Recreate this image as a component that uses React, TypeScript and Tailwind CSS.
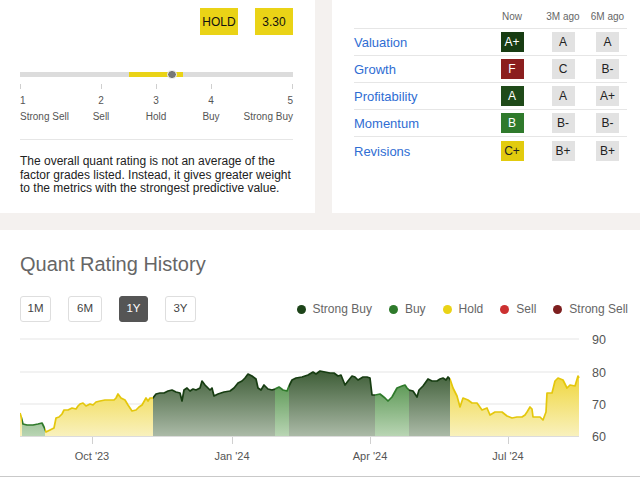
import React from "react";

const grades = [
  { name: "Valuation", now: "A+", nowBg: "bg-[#173c12] text-white", m3: "A", m6: "A" },
  { name: "Growth", now: "F", nowBg: "bg-[#8b1e1e] text-white", m3: "C", m6: "B-" },
  { name: "Profitability", now: "A", nowBg: "bg-[#1f4a19] text-white", m3: "A", m6: "A+" },
  { name: "Momentum", now: "B", nowBg: "bg-[#2f7a2c] text-white", m3: "B-", m6: "B-" },
  { name: "Revisions", now: "C+", nowBg: "bg-[#e2cb0e] text-[#222]", m3: "B+", m6: "B+" },
];

const scale = [
  { n: "1", label: "Strong Sell", w: "w-[61px]", align: "items-start" },
  { n: "2", label: "Sell", w: "w-[40px]", align: "items-center" },
  { n: "3", label: "Hold", w: "w-[70px]", align: "items-center" },
  { n: "4", label: "Buy", w: "w-[40px]", align: "items-center" },
  { n: "5", label: "Strong Buy", w: "w-[62px]", align: "items-end" },
];

const legend = [
  { label: "Strong Buy", color: "bg-[#1d4419]" },
  { label: "Buy", color: "bg-[#2e7a2b]" },
  { label: "Hold", color: "bg-[#ead316]" },
  { label: "Sell", color: "bg-[#cc3030]" },
  { label: "Strong Sell", color: "bg-[#7d1f1f]" },
];

// page coordinates (x, y) of the rating line
const pts: [number, number][] = [
  [20, 413], [21, 416], [23, 424], [27, 425], [33, 425], [38, 424], [42, 423], [44, 427], [46, 432],
  [50, 430], [54, 428], [56, 418], [59, 417], [62, 414], [64, 410], [68, 410], [72, 408], [76, 409],
  [78, 406], [80, 404], [83, 403], [86, 406], [90, 404], [93, 405], [96, 402], [100, 401], [105, 400],
  [110, 400], [114, 400], [116, 398], [118, 394], [121, 398], [125, 400], [128, 405], [132, 411],
  [136, 410], [139, 407], [142, 405], [146, 398], [148, 401], [150, 398], [153, 398], [156, 394],
  [160, 393], [164, 393], [168, 391], [172, 390], [176, 392], [180, 393], [182, 401], [184, 390],
  [187, 388], [190, 391], [193, 389], [196, 390], [200, 388], [202, 381], [205, 385], [208, 388],
  [210, 390], [212, 388], [214, 396], [218, 394], [224, 392], [230, 391], [234, 388], [238, 383],
  [242, 381], [245, 378], [248, 374], [252, 376], [256, 379], [258, 388], [261, 390], [264, 385],
  [268, 389], [272, 390], [275, 389], [279, 387], [283, 390], [287, 391], [289, 386], [292, 380],
  [296, 378], [302, 377], [308, 375], [313, 372], [316, 374], [320, 371], [325, 372], [330, 373],
  [334, 373], [338, 376], [341, 375], [345, 385], [348, 381], [352, 376], [355, 377], [358, 380],
  [363, 377], [367, 377], [370, 378], [372, 395], [375, 395], [380, 394], [385, 398], [388, 401],
  [392, 397], [397, 388], [402, 386], [405, 385], [407, 388], [409, 390], [413, 391], [417, 397],
  [419, 390], [423, 386], [428, 379], [432, 381], [437, 381], [440, 379], [443, 378], [446, 380],
  [448, 377], [450, 379], [453, 388], [457, 396], [460, 407], [463, 398], [468, 400], [472, 403],
  [477, 403], [482, 410], [487, 408], [490, 415], [495, 412], [502, 412], [507, 416], [512, 418],
  [517, 417], [522, 417], [525, 415], [527, 412], [530, 407], [532, 409], [533, 417], [540, 417],
  [543, 420], [546, 412], [547, 393], [552, 393], [555, 381], [558, 378], [563, 380], [567, 388],
  [570, 385], [575, 386], [578, 376], [579, 378],
];

const segments: { x0: number; x1: number; kind: "hold" | "buy" | "sbuy" }[] = [
  { x0: 20, x1: 22, kind: "hold" },
  { x0: 22, x1: 45, kind: "buy" },
  { x0: 45, x1: 153, kind: "hold" },
  { x0: 153, x1: 275, kind: "sbuy" },
  { x0: 275, x1: 289, kind: "buy" },
  { x0: 289, x1: 375, kind: "sbuy" },
  { x0: 375, x1: 409, kind: "buy" },
  { x0: 409, x1: 450, kind: "sbuy" },
  { x0: 450, x1: 580, kind: "hold" },
];

const strokes = { hold: "#e4c70c", buy: "#2f7a2b", sbuy: "#173d12" };

function Chart() {
  const line = pts.map(([x, y]) => `${x},${y}`).join(" ");
  const area = `M20,436 L${pts.map(([x, y]) => `${x},${y}`).join(" L")} L579,436 Z`;
  const font = "'Liberation Sans', Arial, sans-serif";
  return (
    <svg width="640" height="135" viewBox="0 330 640 135" className="block">
      <defs>
        <linearGradient id="g-hold" x1="0" y1="375" x2="0" y2="436" gradientUnits="userSpaceOnUse">
          <stop offset="0" stopColor="#efd63c" />
          <stop offset="1" stopColor="#f9f1bd" />
        </linearGradient>
        <linearGradient id="g-sbuy" x1="0" y1="372" x2="0" y2="436" gradientUnits="userSpaceOnUse">
          <stop offset="0" stopColor="#3f5e38" />
          <stop offset="1" stopColor="#abbaa7" />
        </linearGradient>
        <linearGradient id="g-buy" x1="0" y1="385" x2="0" y2="436" gradientUnits="userSpaceOnUse">
          <stop offset="0" stopColor="#5f9a58" />
          <stop offset="1" stopColor="#b9d5b4" />
        </linearGradient>
        {segments.map((s, i) => (
          <clipPath key={i} id={`seg${i}`}>
            <rect x={s.x0} y="330" width={s.x1 - s.x0} height="107" />
          </clipPath>
        ))}
      </defs>
      {[339, 372, 404].map((y) => (
        <line key={y} x1="20" x2="579" y1={y} y2={y} stroke="#e6e6e6" strokeWidth="1.2" />
      ))}
      {segments.map((s, i) => (
        <g key={i} clipPath={`url(#seg${i})`}>
          <path d={area} fill={`url(#g-${s.kind})`} />
          <polyline points={line} fill="none" stroke={strokes[s.kind]} strokeWidth="1.7" strokeLinejoin="round" />
        </g>
      ))}
      <line x1="20" x2="579" y1="436.5" y2="436.5" stroke="#dcdcdc" strokeWidth="1" />
      {[92, 232, 370, 508].map((x) => (
        <line key={x} x1={x + 0.5} x2={x + 0.5} y1="437" y2="444" stroke="#d0d0d0" strokeWidth="1" />
      ))}
      {[
        { x: 92, t: "Oct '23" },
        { x: 232, t: "Jan '24" },
        { x: 370, t: "Apr '24" },
        { x: 508, t: "Jul '24" },
      ].map((l) => (
        <text key={l.t} x={l.x} y="460" textAnchor="middle" fontSize="11" fill="#555" fontFamily={font}>
          {l.t}
        </text>
      ))}
      {[
        { y: 339, t: "90" },
        { y: 372, t: "80" },
        { y: 404, t: "70" },
        { y: 436, t: "60" },
      ].map((l) => (
        <text key={l.t} x="592" y={l.y + 4.5} fontSize="12.5" fill="#555" fontFamily={font}>
          {l.t}
        </text>
      ))}
    </svg>
  );
}

export default function App() {
  return (
    <div className="w-[640px] h-[477px] overflow-hidden bg-[#f4f1ef] font-['Liberation_Sans',Arial,sans-serif]">
      <div className="flex h-[213px] gap-[17px]">
        {/* overall rating */}
        <div className="w-[315px] bg-white pl-[20px] pr-[22px] pt-[8px]">
          <div className="flex justify-end gap-[17px]">
            <div className="flex h-[27px] w-[38px] items-center justify-center bg-[#ead316] text-[12px] text-[#111]">
              HOLD
            </div>
            <div className="flex h-[27px] w-[38px] items-center justify-center bg-[#ead316] text-[12px] text-[#111]">
              3.30
            </div>
          </div>
          <div className="relative mt-[37px] h-[5px] bg-[#dcdcdc]">
            <div className="absolute left-[109px] top-0 h-[5px] w-[54px] bg-[#ead316]" />
            <div className="absolute left-[147px] top-[-2px] h-[9px] w-[10px] rounded-full border border-white bg-[#777]" />
          </div>
          <div className="mt-[7px] flex">
            {scale.map((s) => (
              <div key={s.n} className={`flex flex-col ${s.w} ${s.align} text-[10px] text-[#555]`}>
                <div className="h-[5px] w-px bg-[#cfcfcf]" />
                <div className="mt-[6px] leading-[12px]">{s.n}</div>
                <div className="mt-[4px] leading-[12px] whitespace-nowrap">{s.label}</div>
              </div>
            ))}
          </div>
          <div className="mt-[16px] border-t border-[#e6e6e6]" />
          <p className="mt-[15px] text-[12px] leading-[13.5px] text-[#222]">
            The overall quant rating is not an average of the factor grades listed. Instead, it gives
            greater weight to the metrics with the strongest predictive value.
          </p>
        </div>

        {/* factor grades */}
        <div className="flex-1 bg-white pl-[22px] pr-[13px]">
          <div className="grid h-[29px] grid-cols-[1fr_52px_50px_39px] border-b border-[#e6e6e6] pt-[11px] text-[10px] leading-[12px] text-[#666]">
            <div />
            <div className="text-center">Now</div>
            <div className="text-center">3M ago</div>
            <div className="text-center whitespace-nowrap">6M ago</div>
          </div>
          {grades.map((g, i) => (
            <div
              key={g.name}
              className={`grid h-[27px] grid-cols-[1fr_52px_50px_39px] items-center ${
                i < grades.length - 1 ? "border-b border-[#e6e6e6]" : ""
              }`}
            >
              <div className="pt-[2px] text-[13px] text-[#2f6dd3]">{g.name}</div>
              <div className="flex justify-center">
                <span className={`flex h-[20px] w-[23px] items-center justify-center text-[12px] ${g.nowBg}`}>
                  {g.now}
                </span>
              </div>
              <div className="flex justify-center">
                <span className="flex h-[20px] w-[23px] items-center justify-center bg-[#e2e2e2] text-[12px] text-[#222]">
                  {g.m3}
                </span>
              </div>
              <div className="flex justify-center">
                <span className="flex h-[20px] w-[23px] items-center justify-center bg-[#e2e2e2] text-[12px] text-[#222]">
                  {g.m6}
                </span>
              </div>
            </div>
          ))}
        </div>
      </div>

      {/* history */}
      <div className="mt-[17px] h-[247px] border-b border-[#c9c9c9] bg-white">
        <h2 className="pl-[20px] pt-[22px] text-[20px] leading-[24px] font-normal text-[#666]">
          Quant Rating History
        </h2>
        <div className="mt-[20px] flex items-center pl-[20px] pr-[12px]">
          <div className="flex gap-[17px] text-[11.5px]">
            <button className="h-[26px] w-[31px] rounded-[3px] border border-[#dedede] text-[#444]">1M</button>
            <button className="h-[26px] w-[34px] rounded-[3px] border border-[#dedede] text-[#444]">6M</button>
            <button className="h-[26px] w-[29px] rounded-[3px] border border-[#555] bg-[#555] text-white">1Y</button>
            <button className="h-[26px] w-[31px] rounded-[3px] border border-[#dedede] text-[#444]">3Y</button>
          </div>
          <div className="ml-auto flex items-center gap-[17px] text-[12px] text-[#666]">
            {legend.map((l) => (
              <div key={l.label} className="flex items-center gap-[7px]">
                <span className={`h-[9px] w-[9px] rounded-full ${l.color}`} />
                <span>{l.label}</span>
              </div>
            ))}
          </div>
        </div>
        <div className="mt-[8px]">
          <Chart />
        </div>
      </div>
    </div>
  );
}
